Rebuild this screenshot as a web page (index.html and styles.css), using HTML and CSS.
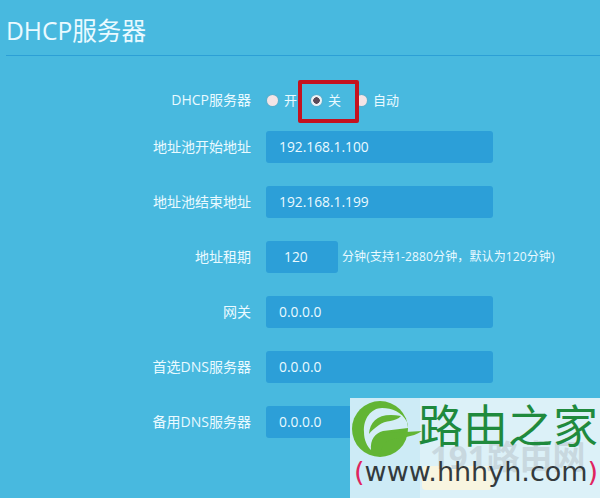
FILE: index.html
```html
<!DOCTYPE html>
<html lang="zh">
<head>
<meta charset="utf-8">
<title>DHCP服务器</title>
<link rel="stylesheet" href="styles.css">
</head>
<body>
<main class="page">
  <h1 class="title">DHCP服务器</h1>
  <form class="form">
    <div class="row radio-row">
      <span class="label">DHCP服务器</span>
      <div class="radios">
        <span class="radio"><i class="dot"></i>开</span>
        <span class="radio radio-on"><i class="dot"></i>关</span>
        <span class="radio"><i class="dot"></i>自动</span>
      </div>
    </div>
    <div class="row"><span class="label">地址池开始地址</span><span class="field">192.168.1.100</span></div>
    <div class="row"><span class="label">地址池结束地址</span><span class="field">192.168.1.199</span></div>
    <div class="row"><span class="label">地址租期</span><span class="field field-short">120</span><span class="hint">分钟(支持1-2880分钟，默认为120分钟)</span></div>
    <div class="row"><span class="label">网关</span><span class="field">0.0.0.0</span></div>
    <div class="row"><span class="label">首选DNS服务器</span><span class="field">0.0.0.0</span></div>
    <div class="row"><span class="label">备用DNS服务器</span><span class="field">0.0.0.0</span></div>
  </form>
  <div class="highlight"></div>
  <aside class="mark">
    <span class="mark-glow"></span>
    <span class="mark-back">191路由网</span>
    <svg class="mark-logo" viewBox="0 0 74 62" width="74" height="62" aria-hidden="true">
      <circle cx="30" cy="31" r="28" fill="#62b534"/>
      <path d="M57 24C52 14 42 10 32 10 21 10 13 21 14 34 14 42 17 48 21 52 20 42 25 35 33 33L58 30Z" fill="#d4eef7"/>
      <path d="M19 36C20 22 30 14 51 18 46 24 35 22 29 27 25 30 21 33 19 36Z" fill="#62b534"/>
      <path d="M22 54C21 42 28 35 39 35L72 33C62 40 50 39 43 41 36 43 32 47 30 56Z" fill="#62b534"/>
    </svg>
    <span class="mark-name">路由之家</span>
    <span class="mark-url"><b>(</b>www.hhhyh.com<b>)</b></span>
  </aside>
</main>
</body>
</html>
```
FILE: styles.css
```css
* { box-sizing: border-box; }
html, body { margin: 0; height: 100%; }
body {
  background: #48b9df;
  color: #eafaff;
  font-family: "Open Sans", "Noto Sans CJK SC", sans-serif;
  overflow: hidden;
}
.page { position: relative; height: 498px; padding-left: 6px; }
.title {
  margin: 0;
  height: 56px;
  padding: 13px 0 0;
  font-size: 24.6px;
  line-height: 36px;
  font-weight: 400;
  border-bottom: 1px solid #2c9fd6;
}
.form { display: flex; flex-direction: column; gap: 23px; padding-top: 36px; }
.row { display: flex; align-items: center; height: 32px; }
.row.radio-row { height: 16px; }
.label {
  width: 245px;
  margin-right: 15px;
  text-align: right;
  font-size: 14px;
  line-height: 18px;
}
.field {
  width: 227px;
  height: 32px;
  padding-left: 13px;
  line-height: 32px;
  font-size: 13.8px;
  background: #2c9fd8;
  border-radius: 3px;
}
.field-short { width: 72px; padding-left: 18px; }
.hint { margin-left: 4px; font-size: 12px; line-height: 16px; letter-spacing: 0.12px; }
.radios { display: flex; font-size: 13px; line-height: 16px; padding-left: 1px; }
.radio { display: flex; align-items: center; gap: 6px; }
.radio:nth-child(1) { width: 44px; }
.radio:nth-child(2) { width: 45px; }
.dot {
  width: 11px;
  height: 11px;
  border-radius: 50%;
  background: #f3e4e6;
  box-shadow: 0 0 2px #7f9aa8;
}
.radio-on .dot { background: radial-gradient(circle, #5c4a58 0 3px, #eef0f2 3.5px); }
.highlight {
  position: absolute;
  left: 298px;
  top: 80px;
  width: 61px;
  height: 43px;
  border: 4px solid #c4121f;
  border-radius: 2px;
}
.mark {
  position: absolute;
  left: 350px;
  top: 398px;
  width: 250px;
  height: 100px;
  background: linear-gradient(90deg, #cdebf6 0 70px, #dcf1f8 70px);
  overflow: hidden;
}
.mark-logo { position: absolute; left: 0; top: 0; }
.mark-back {
  position: absolute;
  left: 80px;
  top: 37px;
  font-size: 33px;
  line-height: 44px;
  font-weight: 700;
  color: #c8d8df;
  white-space: nowrap;
}
.mark-glow {
  position: absolute;
  left: 72px;
  top: 68px;
  width: 70px;
  height: 24px;
  border-radius: 4px;
  background: #f8f5e0;
}
.mark-name {
  position: absolute;
  left: 68px;
  top: -5px;
  font-family: "Noto Sans CJK SC", sans-serif;
  font-size: 45px;
  line-height: 62px;
  color: #1f8a3d;
  white-space: nowrap;
}
.mark-url {
  position: absolute;
  left: 4px;
  top: 52px;
  font-family: "DejaVu Sans", sans-serif;
  font-size: 27px;
  line-height: 44px;
  color: #333a3d;
  white-space: nowrap;
}
.mark-url b { font-weight: 400; color: #e0245e; }
```
